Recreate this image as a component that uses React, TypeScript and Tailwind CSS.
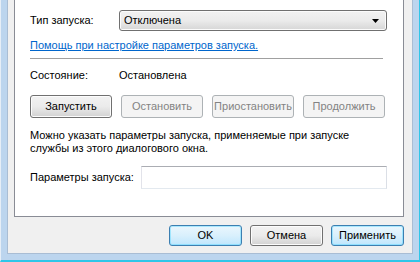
import { ReactNode } from "react";

function Btn({ children, disabled, primary, w }: { children: ReactNode; disabled?: boolean; primary?: boolean; w: string }) {
  if (disabled) {
    return (
      <div className={`${w} h-[23px] flex items-center justify-center rounded-[3px] border border-[#adb2b5] bg-[#f4f4f4] text-[#838383]`}>
        {children}
      </div>
    );
  }
  if (primary) {
    return (
      <div className={`${w} h-[21px] flex items-center justify-center rounded-[3px] border border-[#3c7fb1] bg-gradient-to-b from-[#eaf6fd] via-[#d9f0fc] to-[#bee6fd] shadow-[inset_0_0_0_1px_#48d4ff66] text-black`}>
        {children}
      </div>
    );
  }
  return (
    <div className={`${w} h-[21px] flex items-center justify-center rounded-[3px] border border-[#707070] bg-gradient-to-b from-[#f2f2f2] via-[#ebebeb] to-[#d2d2d2] shadow-[inset_0_0_0_1px_#fcfcfc] text-black`}>
      {children}
    </div>
  );
}

export default function App() {
  return (
    <div className="w-[420px] h-[262px] bg-[#bcd5ee] border-l border-l-[#e6eef7] border-r border-r-[#2fc6e8] border-b-2 border-b-[#2fc6e8] pl-[6px] pr-[6px] pb-[6px] font-['Liberation_Sans',sans-serif] text-[11px] text-black">
      <div className="h-[254px] bg-[#f0f0f0] border-l border-r border-b border-[#a9bdd4] flex flex-col pl-[6px] pr-[8px]">
        {/* tab page */}
        <div className="h-[217px] bg-white border-l border-r border-b border-[#898c95] pl-[15px] pr-[16px] pt-[10px] flex flex-col">
          <div className="h-[21px] flex items-center">
            <span className="w-[89px]">Тип запуска:</span>
            <div className="flex-1 h-[21px] rounded-[3px] border border-[#707070] bg-gradient-to-b from-[#f2f2f2] via-[#ebebeb] to-[#d6d6d6] shadow-[inset_0_0_0_1px_#fbfbfb] flex items-center pl-[4px] pr-[7px]">
              <span className="flex-1">Отключена</span>
              <svg width="7" height="4" viewBox="0 0 7 4">
                <path d="M0 0h7L3.5 4z" fill="#000" />
              </svg>
            </div>
          </div>
          <div className="mt-[7px] h-[14px] leading-[14px] text-[#0066cc] underline">
            Помощь при настройке параметров запуска.
          </div>
          <div className="mt-[6px] h-px bg-[#a0a0a0] mr-[4px]" />
          <div className="mt-[9px] h-[14px] flex items-center">
            <span className="w-[89px]">Состояние:</span>
            <span>Остановлена</span>
          </div>
          <div className="mt-[13px] flex gap-[9px]">
            <div className="w-[82px] h-[23px] flex items-center justify-center rounded-[3px] border border-[#707070] bg-gradient-to-b from-[#f2f2f2] via-[#ebebeb] to-[#d2d2d2] shadow-[inset_0_0_0_1px_#fcfcfc]">
              Запустить
            </div>
            <Btn disabled w="w-[82px]">Остановить</Btn>
            <Btn disabled w="w-[82px]">Приостановить</Btn>
            <Btn disabled w="w-[82px]">Продолжить</Btn>
          </div>
          <p className="mt-[11px] leading-[13px]">
            Можно указать параметры запуска, применяемые при запуске
            <br />
            службы из этого диалогового окна.
          </p>
          <div className="mt-[11px] flex items-center">
            <span className="w-[111px]">Параметры запуска:</span>
            <div className="flex-1 h-[23px] border border-[#abadb3] border-t-[#abadb3] border-l-[#e2e3ea] border-r-[#dbdfe6] border-b-[#e3e9ef] bg-white" />
          </div>
        </div>
        <div className="mt-[8px] flex justify-end gap-[8px] pr-[-1px]">
          <Btn primary w="w-[73px]">OK</Btn>
          <Btn w="w-[73px]">Отмена</Btn>
          <Btn primary w="w-[73px]">Применить</Btn>
        </div>
      </div>
    </div>
  );
}
